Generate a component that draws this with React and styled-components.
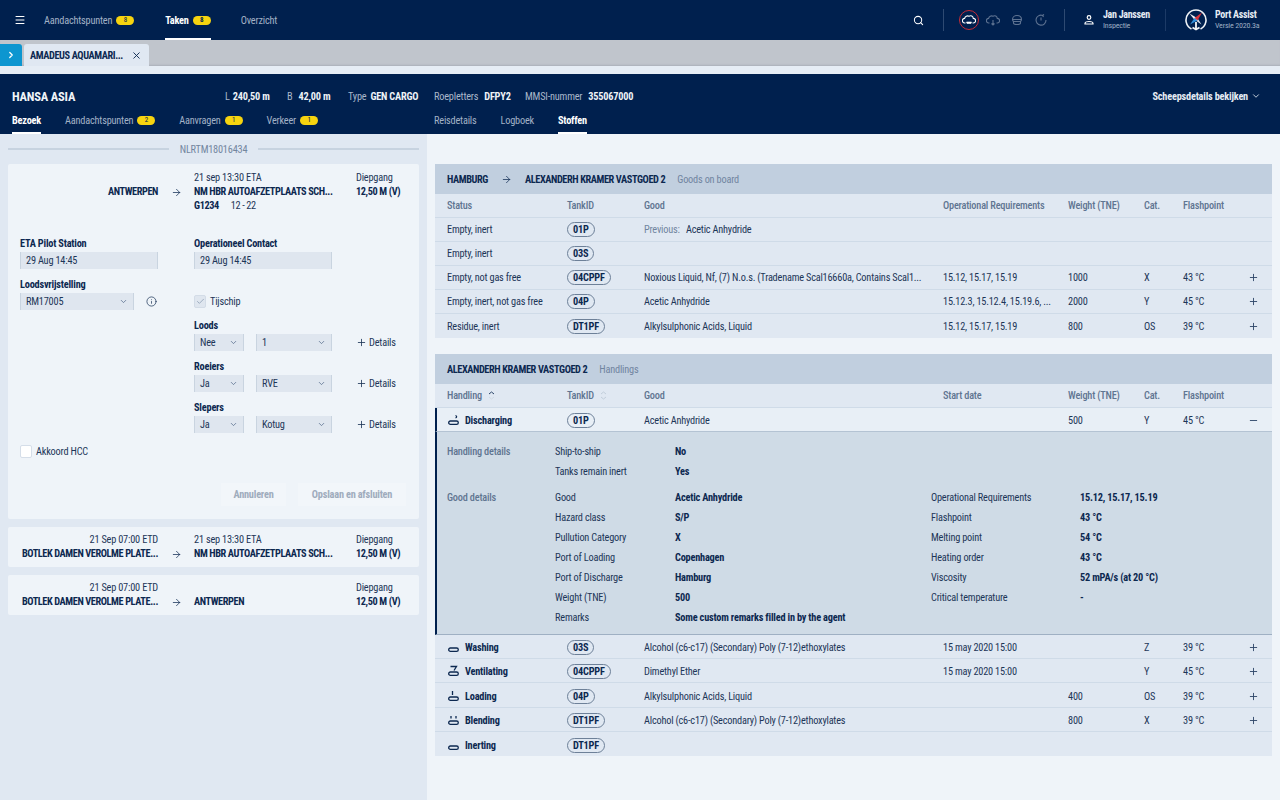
import React, { Fragment } from 'react';
import styled, { createGlobalStyle } from 'styled-components';
import { Menu, Search, ChevronRight, ChevronDown, X, Plus, Minus, ArrowRight, Info, Check } from 'lucide-react';

const COLORS = {
  NAVY: '#00204e',
  TEXT: '#1d3658',
  DARK: '#0c2850',
  MUTED: '#5f7591',
  PANEL: '#e0e8f2',
  PAGE: '#eff4f9',
  HEAD: '#c1cfdf',
  LINE: '#cfdbe8',
  YELLOW: '#f7d40f',
  FIELD: '#dfe6ef',
};

const GlobalStyle = createGlobalStyle`
  html, body {
    margin: 0;
    padding: 0;
    height: 100%;
    overflow: hidden;
    background: ${COLORS.PAGE};
    font-family: "Roboto", "Lato", "Liberation Sans", sans-serif;
    font-stretch: 75%;
    font-size: 10.3px;
    letter-spacing: -0.2px;
    color: ${COLORS.TEXT};
  }
  * { box-sizing: border-box; }
`;

const Page = styled.div`
  width: 1280px;
  height: 800px;
  display: flex;
  flex-direction: column;
`;

/* top navigation */
const TopBar = styled.header`
  height: 40px;
  background: ${COLORS.NAVY};
  display: flex;
  align-items: stretch;
  color: #fff;
  flex: none;
`;

const MenuButton = styled.div`
  width: 44px;
  display: flex;
  align-items: center;
  padding-left: 14px;
`;

const NavItem = styled.div`
  display: flex;
  align-items: center;
  gap: 4px;
  margin-right: ${(p) => p.$gap || 0}px;
  height: 40px;
  font-weight: ${(p) => (p.$active ? 700 : 400)};
  color: ${(p) => (p.$active ? '#fff' : '#a3b2c6')};
  border-bottom: 2px solid ${(p) => (p.$active ? '#fff' : 'transparent')};
  padding-top: 2px;
  white-space: nowrap;
`;

const Badge = styled.span`
  width: 18px;
  height: 9px;
  border-radius: 5px;
  background: ${COLORS.YELLOW};
  color: ${COLORS.NAVY};
  font-size: 7px;
  line-height: 9px;
  text-align: center;
`;

const TopRight = styled.div`
  margin-left: auto;
  display: flex;
  align-items: center;
  padding-right: 8px;
`;

const VLine = styled.div`
  width: 1px;
  height: 22px;
  background: ${(p) => p.$dim ? '#1c3a66' : '#2e4a72'};
  margin: 0 ${(p) => p.$right || 0}px 0 ${(p) => p.$left || 0}px;
`;

const StatusIcons = styled.div`
  display: flex;
  align-items: center;
  gap: 4px;
`;

const StatusIcon = styled.div`
  width: 20px;
  height: 20px;
  display: flex;
  align-items: center;
  justify-content: center;
  border-radius: 50%;
  color: ${(p) => (p.$active ? '#fff' : '#5d7291')};
  border: 1.5px solid ${(p) => (p.$active ? '#c62c36' : 'transparent')};
`;

const UserBlock = styled.div`
  display: flex;
  flex-direction: column;
  margin-left: 8px;
  width: ${(p) => p.$w}px;
`;

const UserName = styled.div`
  font-size: 10px;
  line-height: 12px;
  font-weight: 700;
  letter-spacing: -0.3px;
  color: #e6ecf4;
  white-space: nowrap;
`;

const UserRole = styled.div`
  font-size: 8px;
  line-height: 10px;
  color: #9eaec3;
  white-space: nowrap;
`;

/* vessel tabs */
const TabStrip = styled.div`
  height: 26px;
  flex: none;
  background: #c0c5cc;
  box-shadow: inset 0 -2px 2px -1px #aab0b9;
  display: flex;
  align-items: flex-end;
  gap: 2px;
`;

const StripToggle = styled.div`
  width: 22px;
  height: 22px;
  background: #0d96d0;
  border-top-right-radius: 3px;
  color: #fff;
  display: flex;
  align-items: center;
  justify-content: center;
`;

const VesselTab = styled.div`
  width: 125px;
  height: 22px;
  background: ${COLORS.PANEL};
  border-radius: 3px 3px 0 0;
  display: flex;
  align-items: center;
  justify-content: space-between;
  padding: 0 7px 0 6px;
  font-weight: 700;
  letter-spacing: -0.4px;
  white-space: nowrap;
  color: ${COLORS.DARK};
`;

const Spacer = styled.div`
  height: 8px;
  flex: none;
  background: #e6edf5;
`;

/* ship header */
const ShipHeader = styled.div`
  height: 60px;
  flex: none;
  background: ${COLORS.NAVY};
  color: #fff;
  padding: 14px 12px 0;
`;

const ShipRow = styled.div`
  display: flex;
  align-items: center;
  height: 16px;
`;

const ShipName = styled.div`
  width: 213px;
  font-size: 12.5px;
  font-weight: 700;
  color: #f0f4f8;
`;

const Spec = styled.div`
  width: ${(p) => p.$w}px;
  color: #a9b7ca;
  white-space: nowrap;
  b {
    color: #eef2f7;
    margin-left: ${(p) => p.$gap || 3}px;
  }
`;

const DetailsLink = styled.div`
  margin-left: auto;
  margin-right: 7px;
  display: flex;
  align-items: center;
  gap: 3px;
  font-weight: 700;
  color: #e6ecf4;
`;

const ShipTabs = styled.div`
  display: flex;
  margin-top: 6px;
`;

const ShipTabGroup = styled.div`
  display: flex;
  width: ${(p) => p.$w || 'auto'};
`;

const ShipTab = styled(NavItem)`
  height: 24px;
  padding-top: 0;
  padding-bottom: 1px;
`;

/* body */
const Body = styled.div`
  flex: 1;
  display: flex;
  min-height: 0;
`;

const LeftPanel = styled.aside`
  width: 427px;
  flex: none;
  background: ${COLORS.PANEL};
  padding: 7px 8px 0;
`;

const Divider = styled.div`
  display: flex;
  align-items: center;
  gap: 11px;
  height: 16px;
  margin-bottom: 7px;
  color: #73869f;
  &::before, &::after {
    content: '';
    flex: 1;
    height: 2px;
    background: #c7d3e0;
  }
`;

const Card = styled.div`
  background: ${COLORS.PAGE};
  border-radius: 2px;
  padding: ${(p) => p.$pad || '6px 0 6px 12px'};
  margin-bottom: 8px;
`;

const Leg = styled.div`
  display: grid;
  grid-template-columns: 138px 36px 162px 1fr;
  line-height: 14px;
`;

const LegEnd = styled.div`
  text-align: right;
  white-space: nowrap;
`;

const LegStrong = styled.div`
  font-weight: 700;
  letter-spacing: -0.4px;
  color: ${COLORS.DARK};
  white-space: nowrap;
  margin-top: ${(p) => p.$top || 0}px;
`;

const LegArrow = styled.div`
  display: flex;
  align-items: flex-end;
  justify-content: center;
  height: 28px;
  padding-bottom: 1px;
  color: ${COLORS.DARK};
`;

const LegNote = styled.span`
  font-weight: 400;
  color: ${COLORS.TEXT};
  margin-left: 12px;
`;

const FormGrid = styled.div`
  display: grid;
  grid-template-columns: 174px 1fr;
  margin-top: 24px;
`;

const FormColumn = styled.div`
  display: flex;
  flex-direction: column;
  gap: 9px;
`;

const Field = styled.div`
  display: flex;
  flex-direction: column;
  gap: 1px;
`;

const Label = styled.div`
  font-weight: 700;
  height: 14px;
  line-height: 14px;
  color: ${COLORS.DARK};
`;

const FieldRow = styled.div`
  display: flex;
  align-items: center;
  gap: ${(p) => p.$gap || 12}px;
  height: 17px;
`;

const Input = styled.div`
  width: ${(p) => p.$w}px;
  height: 17px;
  line-height: 17px;
  background: ${COLORS.FIELD};
  box-shadow: inset 1px 0 #c9d4e0, inset -1px 0 #c9d4e0;
  padding: 0 6px;
  display: flex;
  justify-content: space-between;
  align-items: center;
`;

const SelectCaret = styled(ChevronDown)`
  color: #53698a;
  flex: none;
`;

const CheckBox = styled.div`
  width: 12px;
  height: 13px;
  border-radius: 2px;
  background: ${(p) => (p.$checked ? COLORS.FIELD : '#fff')};
  border: 1px solid ${(p) => (p.$checked ? '#d3dce7' : '#d5dee9')};
  color: #8a9bb1;
  display: flex;
  align-items: center;
  justify-content: center;
`;

const CheckRow = styled.div`
  display: flex;
  align-items: center;
  gap: 4px;
  height: 17px;
`;

const DetailsAction = styled.div`
  display: flex;
  align-items: center;
  gap: 2px;
  margin-left: 12px;
`;

const Approval = styled(CheckRow)`
  margin-top: 10px;
`;

const Actions = styled.div`
  display: flex;
  justify-content: flex-end;
  gap: 12px;
  margin-top: 23px;
  padding-right: 13px;
`;

const GhostButton = styled.div`
  width: ${(p) => p.$w}px;
  height: 23px;
  line-height: 23px;
  text-align: center;
  font-weight: 700;
  color: #9facbd;
  background: #f2f6fa;
`;

/* right content */
const Content = styled.main`
  flex: 1;
  padding: 30px 8px 0;
  min-width: 0;
`;

const Section = styled.section`
  margin-bottom: 16px;
  background: ${COLORS.PANEL};
`;

const SectionHead = styled.div`
  height: 30px;
  background: ${COLORS.HEAD};
  display: flex;
  align-items: center;
  padding: 1px 0 0 12px;
  font-weight: 700;
  letter-spacing: -0.4px;
  color: ${COLORS.DARK};
`;

const HeadArrow = styled(ArrowRight)`
  margin: 0 13px 0 13px;
`;

const SectionSub = styled.span`
  font-weight: 400;
  letter-spacing: -0.2px;
  color: #71859f;
  margin-left: 12px;
`;

const Row = styled.div`
  display: grid;
  grid-template-columns: 120px 77px 299px 125px 76px 39px 60px 1fr;
  align-items: center;
  height: ${(p) => p.$h || 24}px;
  padding-left: ${(p) => (p.$open ? 10 : 12)}px;
  padding-top: ${(p) => (p.$low ? 2 : 0)}px;
  background: ${(p) => (p.$open ? '#e8eff6' : 'transparent')};
  border-left: ${(p) => (p.$open ? `2px solid ${COLORS.NAVY}` : 'none')};
  border-bottom: 1px solid ${(p) => (p.$open ? '#b4c3d3' : COLORS.LINE)};
  &:last-child { border-bottom: none; }
`;

const HeadCell = styled.div`
  color: ${COLORS.MUTED};
  font-weight: 500;
  display: flex;
  align-items: center;
  gap: 6px;
  white-space: nowrap;
`;

const Cell = styled.div`
  white-space: nowrap;
`;

const Prev = styled.span`
  color: #71859f;
  margin-right: 4px;
`;

const Tank = styled.span`
  display: inline-block;
  height: 15px;
  line-height: 13px;
  padding: 0 5px;
  border: 1px solid #6d8098;
  border-radius: 8px;
  font-weight: 700;
  color: ${COLORS.DARK};
`;

const ActionCell = styled.div`
  display: flex;
  justify-content: center;
  padding-right: 8px;
  color: #2f4769;
`;

const HandlingCell = styled.div`
  display: flex;
  align-items: center;
  gap: 5px;
  font-weight: 700;
  color: ${COLORS.DARK};
`;

const DetailPanel = styled.div`
  background: #cfdbe6;
  border-left: 2px solid ${COLORS.NAVY};
  border-bottom: 1px solid #9fb0c3;
  padding: 9px 0 7px 10px;
  display: flex;
  flex-direction: column;
  gap: 6px;
`;

const DetailGroup = styled.div`
  display: grid;
  grid-template-columns: 108px 120px 256px 149px 1fr;
  grid-auto-rows: 20px;
  align-items: center;
`;

const DetailHeading = styled.div`
  color: ${COLORS.MUTED};
  font-weight: 500;
`;

const DetailKey = styled.div`
  color: ${COLORS.TEXT};
`;

const DetailValue = styled.div`
  font-weight: 700;
  color: ${COLORS.DARK};
  white-space: nowrap;
`;

/* drawings */
const CloudIcon = ({ ship, arrow }) => (
  <svg width="14" height="14" viewBox="0 0 14 14" fill="none" stroke="currentColor" strokeWidth="1.1">
    <path d="M3.5 10H2.800a2.300 2.300 0 0 1-.2-4.600A3.100 3.100 0 0 1 7 3.200a2.800 2.800 0 0 1 4.300 2.200 2.300 2.300 0 0 1 0 4.600h-.8" />
    {ship && <path d="M4.500 9h5l-.5 1.500H5z" fill="currentColor" strokeWidth="0.6" />}
    {arrow && <path d="M7 7v5M5.500 10.500 7 12l1.500-1.500" />}
  </svg>
);

const CapIcon = () => (
  <svg width="14" height="14" viewBox="0 0 14 14" fill="none" stroke="currentColor" strokeWidth="1.1">
    <path d="M2.500 6.500C2.500 4 4.500 2.500 7 2.500s4.500 1.500 4.500 4M2.500 6.500h9M2.500 6.500c0 1 .5 1.500 1 2v1.500c0 1 1.500 1.500 3.500 1.500s3.500-.5 3.500-1.500V8.500c.5-.5 1-1 1-2M3.500 8.500h7" />
  </svg>
);

const ClockIcon = () => (
  <svg width="14" height="14" viewBox="0 0 14 14" fill="none" stroke="currentColor" strokeWidth="1.100">
    <path d="M8.500 2.400A5 5 0 1 0 12 7M7 4.500V7.500M10 1.500l-1.500 1 1 1.500" />
  </svg>
);

const UserIcon = () => (
  <svg width="12" height="12" viewBox="0 0 12 12" fill="none" stroke="#fff" strokeWidth="1.200">
    <circle cx="6" cy="3.500" r="1.800" />
    <path d="M2 9.500c0-1.500 2-2 4-2s4 .500 4 2v.500H2z" />
  </svg>
);

const PortLogo = () => (
  <svg width="22" height="22" viewBox="0 0 22 22">
    <path d="M6.500 20A10 10 0 1 1 15.500 20" fill="none" stroke="#eef2f6" strokeWidth="1.600" />
    <path d="M4.500 4.500 12 9l-2 2.500z" fill="#eef2f6" />
    <path d="M16.500 15.500 10 11l2-2.500z" fill="#dbe3ec" />
    <path d="M17 3.500 9.500 9l3 2.500z" fill="#d8333c" />
    <path d="M5 15.500 9.500 9l3 2.500z" fill="#2f8fdc" />
    <path d="M11 13v7M7.500 18.500 11 20.500l3.500-2" fill="none" stroke="#f2f5f8" strokeWidth="1.800" />
  </svg>
);

const SortIcon = ({ active }) => (
  <svg width="7" height="9" viewBox="0 0 7 9" fill="none" strokeWidth="1">
    <path d="M1 3 3.500 1 6 3" stroke={active ? '#2b4468' : '#c2cedb'} />
    <path d="M1 6l2.500 2L6 6" stroke={active ? '#d0dae5' : '#c2cedb'} />
  </svg>
);

const HANDLING_MARKS = {
  discharging: <path d="M8.500 1.500c1.500.5 1.500 1.800 0 2.500" />,
  washing: null,
  ventilating: <path d="M3.500 1.500h6L7 5.500" />,
  loading: <path d="M5.500 1v4" />,
  blending: <path d="M4 2v2.500M9 2v2.500" />,
  inerting: null,
};

const HandlingIcon = ({ kind }) => (
  <svg width="13" height="13" viewBox="0 0 13 13" fill="none" stroke={COLORS.DARK} strokeWidth="1.300">
    {HANDLING_MARKS[kind]}
    <rect x="1.700" y="7" width="9.600" height="3.400" rx="1.700" />
  </svg>
);

const Select = ({ w, children }) => (
  <Input $w={w}>
    {children}
    <SelectCaret size={9} strokeWidth={2} />
  </Input>
);

const PILOT_ROWS = [
  { label: 'Loods', first: 'Nee', second: '1' },
  { label: 'Roeiers', first: 'Ja', second: 'RVE' },
  { label: 'Slepers', first: 'Ja', second: 'Kotug' },
];

const GOODS = [
  { status: 'Empty, inert', tank: '01P', previous: 'Acetic Anhydride' },
  { status: 'Empty, inert', tank: '03S' },
  { status: 'Empty, not gas free', tank: '04CPPF', good: 'Noxious Liquid, Nf, (7) N.o.s. (Tradename Scal16660a, Contains Scal1...', req: '15.12, 15.17, 15.19', weight: '1000', cat: 'X', flash: '43 °C' },
  { status: 'Empty, inert, not gas free', tank: '04P', good: 'Acetic Anhydride', req: '15.12.3, 15.12.4, 15.19.6, ...', weight: '2000', cat: 'Y', flash: '45 °C' },
  { status: 'Residue, inert', tank: 'DT1PF', good: 'Alkylsulphonic Acids, Liquid', req: '15.12, 15.17, 15.19', weight: '800', cat: 'OS', flash: '39 °C' },
];

const HANDLINGS = [
  { kind: 'washing', name: 'Washing', tank: '03S', good: 'Alcohol (c6-c17) (Secondary) Poly (7-12)ethoxylates', date: '15 may 2020 15:00', cat: 'Z', flash: '39 °C' },
  { kind: 'ventilating', name: 'Ventilating', tank: '04CPPF', good: 'Dimethyl Ether', date: '15 may 2020 15:00', cat: 'Y', flash: '45 °C' },
  { kind: 'loading', name: 'Loading', tank: '04P', good: 'Alkylsulphonic Acids, Liquid', weight: '400', cat: 'OS', flash: '39 °C', h: 25 },
  { kind: 'blending', name: 'Blending', tank: 'DT1PF', good: 'Alcohol (c6-c17) (Secondary) Poly (7-12)ethoxylates', weight: '800', cat: 'X', flash: '39 °C' },
  { kind: 'inerting', name: 'Inerting', tank: 'DT1PF' },
];

const GOOD_DETAILS = [
  ['Good', 'Acetic Anhydride', 'Operational Requirements', '15.12, 15.17, 15.19'],
  ['Hazard class', 'S/P', 'Flashpoint', '43 °C'],
  ['Pullution Category', 'X', 'Melting point', '54 °C'],
  ['Port of Loading', 'Copenhagen', 'Heating order', '43 °C'],
  ['Port of Discharge', 'Hamburg', 'Viscosity', '52 mPA/s (at 20 °C)'],
  ['Weight (TNE)', '500', 'Critical temperature', '-'],
  ['Remarks', 'Some custom remarks filled in by the agent', '', ''],
];

const PlusButton = () => (
  <ActionCell>
    <Plus size={11} strokeWidth={2} />
  </ActionCell>
);

export default function App() {
  return (
    <Fragment>
      <GlobalStyle />
      <Page>
        <TopBar>
          <MenuButton>
            <Menu size={12} strokeWidth={2} />
          </MenuButton>
          <NavItem $gap={31}>Aandachtspunten <Badge>8</Badge></NavItem>
          <NavItem $active $gap={30}>Taken <Badge>8</Badge></NavItem>
          <NavItem>Overzicht</NavItem>
          <TopRight>
            <Search size={11} strokeWidth={2.2} />
            <VLine $left={19} $right={15} />
            <StatusIcons>
              <StatusIcon $active><CloudIcon ship /></StatusIcon>
              <StatusIcon><CloudIcon arrow /></StatusIcon>
              <StatusIcon><CapIcon /></StatusIcon>
              <StatusIcon><ClockIcon /></StatusIcon>
            </StatusIcons>
            <VLine $left={13} $right={18} />
            <UserIcon />
            <UserBlock $w={54}>
              <UserName>Jan Janssen</UserName>
              <UserRole>Inspectie</UserRole>
            </UserBlock>
            <VLine $dim $left={8} $right={19} />
            <PortLogo />
            <UserBlock $w={57}>
              <UserName>Port Assist</UserName>
              <UserRole>Versie 2020.3a</UserRole>
            </UserBlock>
          </TopRight>
        </TopBar>

        <TabStrip>
          <StripToggle><ChevronRight size={10} strokeWidth={3} /></StripToggle>
          <VesselTab>
            AMADEUS AQUAMARI...
            <X size={11} strokeWidth={2} />
          </VesselTab>
        </TabStrip>
        <Spacer />

        <ShipHeader>
          <ShipRow>
            <ShipName>HANSA ASIA</ShipName>
            <Spec $w={62}>L<b>240,50 m</b></Spec>
            <Spec $w={61} $gap={6}>B<b>42,00 m</b></Spec>
            <Spec $w={86} $gap={4}>Type<b>GEN CARGO</b></Spec>
            <Spec $w={91} $gap={6}>Roepletters<b>DFPY2</b></Spec>
            <Spec $w={140} $gap={6}>MMSI-nummer<b>355067000</b></Spec>
            <DetailsLink>Scheepsdetails bekijken <ChevronDown size={10} strokeWidth={2} /></DetailsLink>
          </ShipRow>
          <ShipTabs>
            <ShipTabGroup $w="422px">
              <ShipTab $active $gap={24}>Bezoek</ShipTab>
              <ShipTab $gap={24}>Aandachtspunten <Badge>2</Badge></ShipTab>
              <ShipTab $gap={24}>Aanvragen <Badge>1</Badge></ShipTab>
              <ShipTab>Verkeer <Badge>1</Badge></ShipTab>
            </ShipTabGroup>
            <ShipTabGroup>
              <ShipTab $gap={24}>Reisdetails</ShipTab>
              <ShipTab $gap={24}>Logboek</ShipTab>
              <ShipTab $active>Stoffen</ShipTab>
            </ShipTabGroup>
          </ShipTabs>
        </ShipHeader>

        <Body>
          <LeftPanel>
            <Divider>NLRTM18016434</Divider>
            <Card $pad="7px 0 13px 12px">
              <Leg>
                <LegEnd><LegStrong $top={14}>ANTWERPEN</LegStrong></LegEnd>
                <LegArrow><ArrowRight size={11} strokeWidth={1.6} /></LegArrow>
                <div>
                  <div>21 sep 13:30 ETA</div>
                  <LegStrong>NM HBR AUTOAFZETPLAATS SCH...</LegStrong>
                  <LegStrong>G1234<LegNote>12 - 22</LegNote></LegStrong>
                </div>
                <div>
                  <div>Diepgang</div>
                  <LegStrong>12,50 M (V)</LegStrong>
                </div>
              </Leg>

              <FormGrid>
                <FormColumn>
                  <Field>
                    <Label>ETA Pilot Station</Label>
                    <Input $w={138}>29 Aug 14:45</Input>
                  </Field>
                  <Field>
                    <Label>Loodsvrijstelling</Label>
                    <FieldRow $gap={12}>
                      <Select w={114}>RM17005</Select>
                      <Info size={11} strokeWidth={1.6} />
                    </FieldRow>
                  </Field>
                </FormColumn>
                <FormColumn>
                  <Field>
                    <Label>Operationeel Contact</Label>
                    <Input $w={138}>29 Aug 14:45</Input>
                  </Field>
                  <Field>
                    <Label />
                    <CheckRow>
                      <CheckBox $checked><Check size={9} strokeWidth={2} /></CheckBox>
                      Tijschip
                    </CheckRow>
                  </Field>
                  {PILOT_ROWS.map((row) => (
                    <Field key={row.label}>
                      <Label>{row.label}</Label>
                      <FieldRow>
                        <Select w={50}>{row.first}</Select>
                        <Select w={76}>{row.second}</Select>
                        <DetailsAction>
                          <Plus size={11} strokeWidth={1.8} /> Details
                        </DetailsAction>
                      </FieldRow>
                    </Field>
                  ))}
                </FormColumn>
              </FormGrid>

              <Approval>
                <CheckBox />
                Akkoord HCC
              </Approval>

              <Actions>
                <GhostButton $w={65}>Annuleren</GhostButton>
                <GhostButton $w={108}>Opslaan en afsluiten</GhostButton>
              </Actions>
            </Card>

            <Card>
              <Leg>
                <LegEnd>
                  <div>21 Sep 07:00 ETD</div>
                  <LegStrong>BOTLEK DAMEN VEROLME PLATE...</LegStrong>
                </LegEnd>
                <LegArrow><ArrowRight size={11} strokeWidth={1.6} /></LegArrow>
                <div>
                  <div>21 sep 13:30 ETA</div>
                  <LegStrong>NM HBR AUTOAFZETPLAATS SCH...</LegStrong>
                </div>
                <div>
                  <div>Diepgang</div>
                  <LegStrong>12,50 M (V)</LegStrong>
                </div>
              </Leg>
            </Card>

            <Card>
              <Leg>
                <LegEnd>
                  <div>21 Sep 07:00 ETD</div>
                  <LegStrong>BOTLEK DAMEN VEROLME PLATE...</LegStrong>
                </LegEnd>
                <LegArrow><ArrowRight size={11} strokeWidth={1.6} /></LegArrow>
                <div>
                  <div>&nbsp;</div>
                  <LegStrong>ANTWERPEN</LegStrong>
                </div>
                <div>
                  <div>Diepgang</div>
                  <LegStrong>12,50 M (V)</LegStrong>
                </div>
              </Leg>
            </Card>
          </LeftPanel>

          <Content>
            <Section>
              <SectionHead>
                HAMBURG
                <HeadArrow size={11} strokeWidth={1.6} />
                ALEXANDERH KRAMER VASTGOED 2
                <SectionSub>Goods on board</SectionSub>
              </SectionHead>
              <Row>
                <HeadCell>Status</HeadCell>
                <HeadCell>TankID</HeadCell>
                <HeadCell>Good</HeadCell>
                <HeadCell>Operational Requirements</HeadCell>
                <HeadCell>Weight (TNE)</HeadCell>
                <HeadCell>Cat.</HeadCell>
                <HeadCell>Flashpoint</HeadCell>
              </Row>
              {GOODS.map((item) => (
                <Row key={item.status + item.tank}>
                  <Cell>{item.status}</Cell>
                  <Cell><Tank>{item.tank}</Tank></Cell>
                  <Cell>
                    {item.previous ? <Fragment><Prev>Previous:</Prev> {item.previous}</Fragment> : item.good}
                  </Cell>
                  <Cell>{item.req}</Cell>
                  <Cell>{item.weight}</Cell>
                  <Cell>{item.cat}</Cell>
                  <Cell>{item.flash}</Cell>
                  {item.flash && <PlusButton />}
                </Row>
              ))}
            </Section>

            <Section>
              <SectionHead>
                ALEXANDERH KRAMER VASTGOED 2
                <SectionSub>Handlings</SectionSub>
              </SectionHead>
              <Row>
                <HeadCell>Handling <SortIcon active /></HeadCell>
                <HeadCell>TankID <SortIcon /></HeadCell>
                <HeadCell>Good</HeadCell>
                <HeadCell>Start date</HeadCell>
                <HeadCell>Weight (TNE)</HeadCell>
                <HeadCell>Cat.</HeadCell>
                <HeadCell>Flashpoint</HeadCell>
              </Row>
              <Row $open $low>
                <HandlingCell><HandlingIcon kind="discharging" /> Discharging</HandlingCell>
                <Cell><Tank>01P</Tank></Cell>
                <Cell>Acetic Anhydride</Cell>
                <Cell />
                <Cell>500</Cell>
                <Cell>Y</Cell>
                <Cell>45 °C</Cell>
                <ActionCell><Minus size={11} strokeWidth={2} /></ActionCell>
              </Row>
              <DetailPanel>
                <DetailGroup>
                  <DetailHeading>Handling details</DetailHeading>
                  <DetailKey>Ship-to-ship</DetailKey>
                  <DetailValue>No</DetailValue>
                  <DetailKey />
                  <DetailKey />
                  <DetailKey />
                  <DetailKey>Tanks remain inert</DetailKey>
                  <DetailValue>Yes</DetailValue>
                </DetailGroup>
                <DetailGroup>
                  {GOOD_DETAILS.map((line, i) => (
                    <Fragment key={line[0]}>
                      {i === 0 ? <DetailHeading>Good details</DetailHeading> : <DetailKey />}
                      <DetailKey>{line[0]}</DetailKey>
                      <DetailValue>{line[1]}</DetailValue>
                      <DetailKey>{line[2]}</DetailKey>
                      <DetailValue>{line[3]}</DetailValue>
                    </Fragment>
                  ))}
                </DetailGroup>
              </DetailPanel>
              {HANDLINGS.map((item) => (
                <Row key={item.name} $h={item.h} $low>
                  <HandlingCell><HandlingIcon kind={item.kind} /> {item.name}</HandlingCell>
                  <Cell><Tank>{item.tank}</Tank></Cell>
                  <Cell>{item.good}</Cell>
                  <Cell>{item.date}</Cell>
                  <Cell>{item.weight}</Cell>
                  <Cell>{item.cat}</Cell>
                  <Cell>{item.flash}</Cell>
                  {item.flash && <PlusButton />}
                </Row>
              ))}
            </Section>
          </Content>
        </Body>
      </Page>
    </Fragment>
  );
}
